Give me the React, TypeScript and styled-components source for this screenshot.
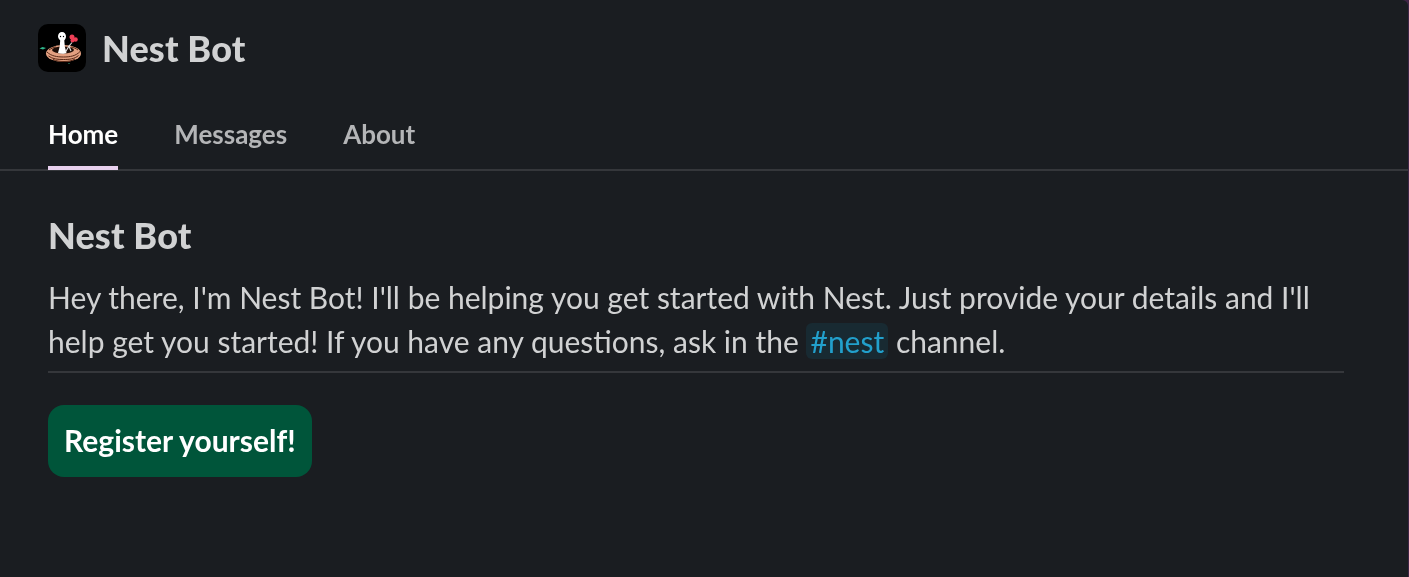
import React, { FC } from "react";
import styled, { createGlobalStyle } from "styled-components";

const GlobalStyle = createGlobalStyle`
  html, body {
    margin: 0;
    padding: 0;
    background: #3f2546;
  }
`;

const tabs = ["Home", "Messages", "About"];

const NestLogo: FC = () => (
  <svg width="48" height="48" viewBox="0 0 48 48">
    <rect width="48" height="48" rx="10" fill="#000" />
    {/* leaf */}
    <path d="M1.500 24.500l3-1.500 3.500 1-3 1.500z" fill="#2fb58a" />
    {/* nest */}
    <ellipse cx="25.500" cy="29.500" rx="17.500" ry="8.500" fill="#e3a081" />
    <ellipse cx="25" cy="26" rx="11" ry="3.500" fill="#1c0c06" />
    <path
      d="M9 28c4 4 10 5 16.500 5S38 32 42 27.500M10.500 32c4 3 9 3.500 15 3.500s11-.5 15-4M15 35.500c3 1.500 7 2 11 2s8-.5 11-2.500M11 26c2-1.500 4-2.500 7-3M33 23c3 .5 5 1.500 7 3"
      stroke="#5a2a18"
      strokeWidth="1"
      fill="none"
    />
    {/* bird */}
    <path
      d="M20 12.500c0-2.500 1.700-4.500 4-4.500s4 2 4 4.500c0 2-1.200 3-1.700 4l.5 6 1.700 6.500c-2 1-6 1-8.500 0l1.700-6.500.5-6c-.5-1-2.200-2-2.200-4z"
      fill="#fff"
    />
    <circle cx="22.500" cy="12.500" r=".7" fill="#000" />
    <circle cx="25.500" cy="12.500" r=".7" fill="#000" />
    <path d="M27.500 28l3.500-6 3-3.500M31 22.500l2 4.500" stroke="#e6e6e6" strokeWidth="1.100" fill="none" />
    {/* flower */}
    <circle cx="34" cy="13" r="2.500" fill="#ee3f56" />
    <circle cx="37.500" cy="15.500" r="2.300" fill="#ee3f56" />
    <circle cx="34.500" cy="16.500" r="2" fill="#ee3f56" />
    <circle cx="31" cy="39.500" r=".6" fill="#2fb58a" />
  </svg>
);

const App: FC = () => {
  return (
    <Wrapper>
      <Layer>
        <Header>
          <LogoBox>
            <NestLogo />
          </LogoBox>
          <Title>Nest Bot</Title>
        </Header>
        <Tabs>
          {tabs.map((tab, i) => (
            <Tab key={tab} $active={i === 0}>
              {tab}
            </Tab>
          ))}
        </Tabs>
        <Content>
          <Heading>Nest Bot</Heading>
          <Text>
            Hey there, I'm Nest Bot! I'll be helping you get started with Nest. Just provide your
            details and I'll help get you started! If you have any questions, ask in the{" "}
            <Channel>#nest</Channel> channel.
          </Text>
          <Divider />
          <Button>Register yourself!</Button>
        </Content>
      </Layer>
    </Wrapper>
  );
};

const Wrapper = styled.div`
  width: 1408px;
  height: 577px;
  overflow: hidden;
  background: #1a1d21;
  border-top-right-radius: 6px;
  font-family: Lato, "Liberation Sans", sans-serif;
  color: #d1d2d3;
`;

const Layer = styled.div`
  will-change: transform;
`;

const Header = styled.div`
  display: flex;
  align-items: center;
  gap: 16px;
  padding: 24px 0 0 38px;
  height: 48px;
`;

const LogoBox = styled.div`
  width: 48px;
  height: 48px;
  flex-shrink: 0;

  svg {
    display: block;
  }
`;

const Title = styled.div`
  font-size: 36px;
  font-weight: 900;
  line-height: 48px;
  letter-spacing: 0.14px;
`;

const Tabs = styled.div`
  display: flex;
  gap: 56px;
  height: 99px;
  padding-left: 48px;
  box-sizing: border-box;
  border-bottom: 2px solid #35373b;
`;

const Tab = styled.div<{ $active?: boolean }>`
  height: 98px;
  box-sizing: border-box;
  padding-top: 45px;
  font-size: 26px;
  line-height: 34px;
  font-weight: 700;
  color: ${(p) => (p.$active ? "#ffffff" : "#b4b5b7")};
  border-bottom: 4px solid ${(p) => (p.$active ? "#e8d0ee" : "transparent")};
`;

const Content = styled.div`
  padding: 42px 64px 0 48px;
`;

const Heading = styled.div`
  font-size: 36px;
  font-weight: 900;
  line-height: 44px;
  letter-spacing: 0.14px;
`;

const Text = styled.div`
  margin-top: 18px;
  font-size: 30px;
  line-height: 44px;
`;

const Channel = styled.span`
  background: #182a32;
  color: #22a0cc;
  border-radius: 6px;
  padding: 0 4px;
`;

const Divider = styled.div`
  height: 2px;
  margin-top: 8px;
  background: #35373b;
`;

const Button = styled.div`
  display: inline-flex;
  align-items: center;
  justify-content: center;
  box-sizing: border-box;
  margin-top: 32px;
  height: 72px;
  padding: 0 16px 2px;
  border-radius: 16px;
  background: #00553a;
  color: #fff;
  font-size: 30px;
  font-weight: 700;
`;

export default () => (
  <>
    <GlobalStyle />
    <App />
  </>
);
